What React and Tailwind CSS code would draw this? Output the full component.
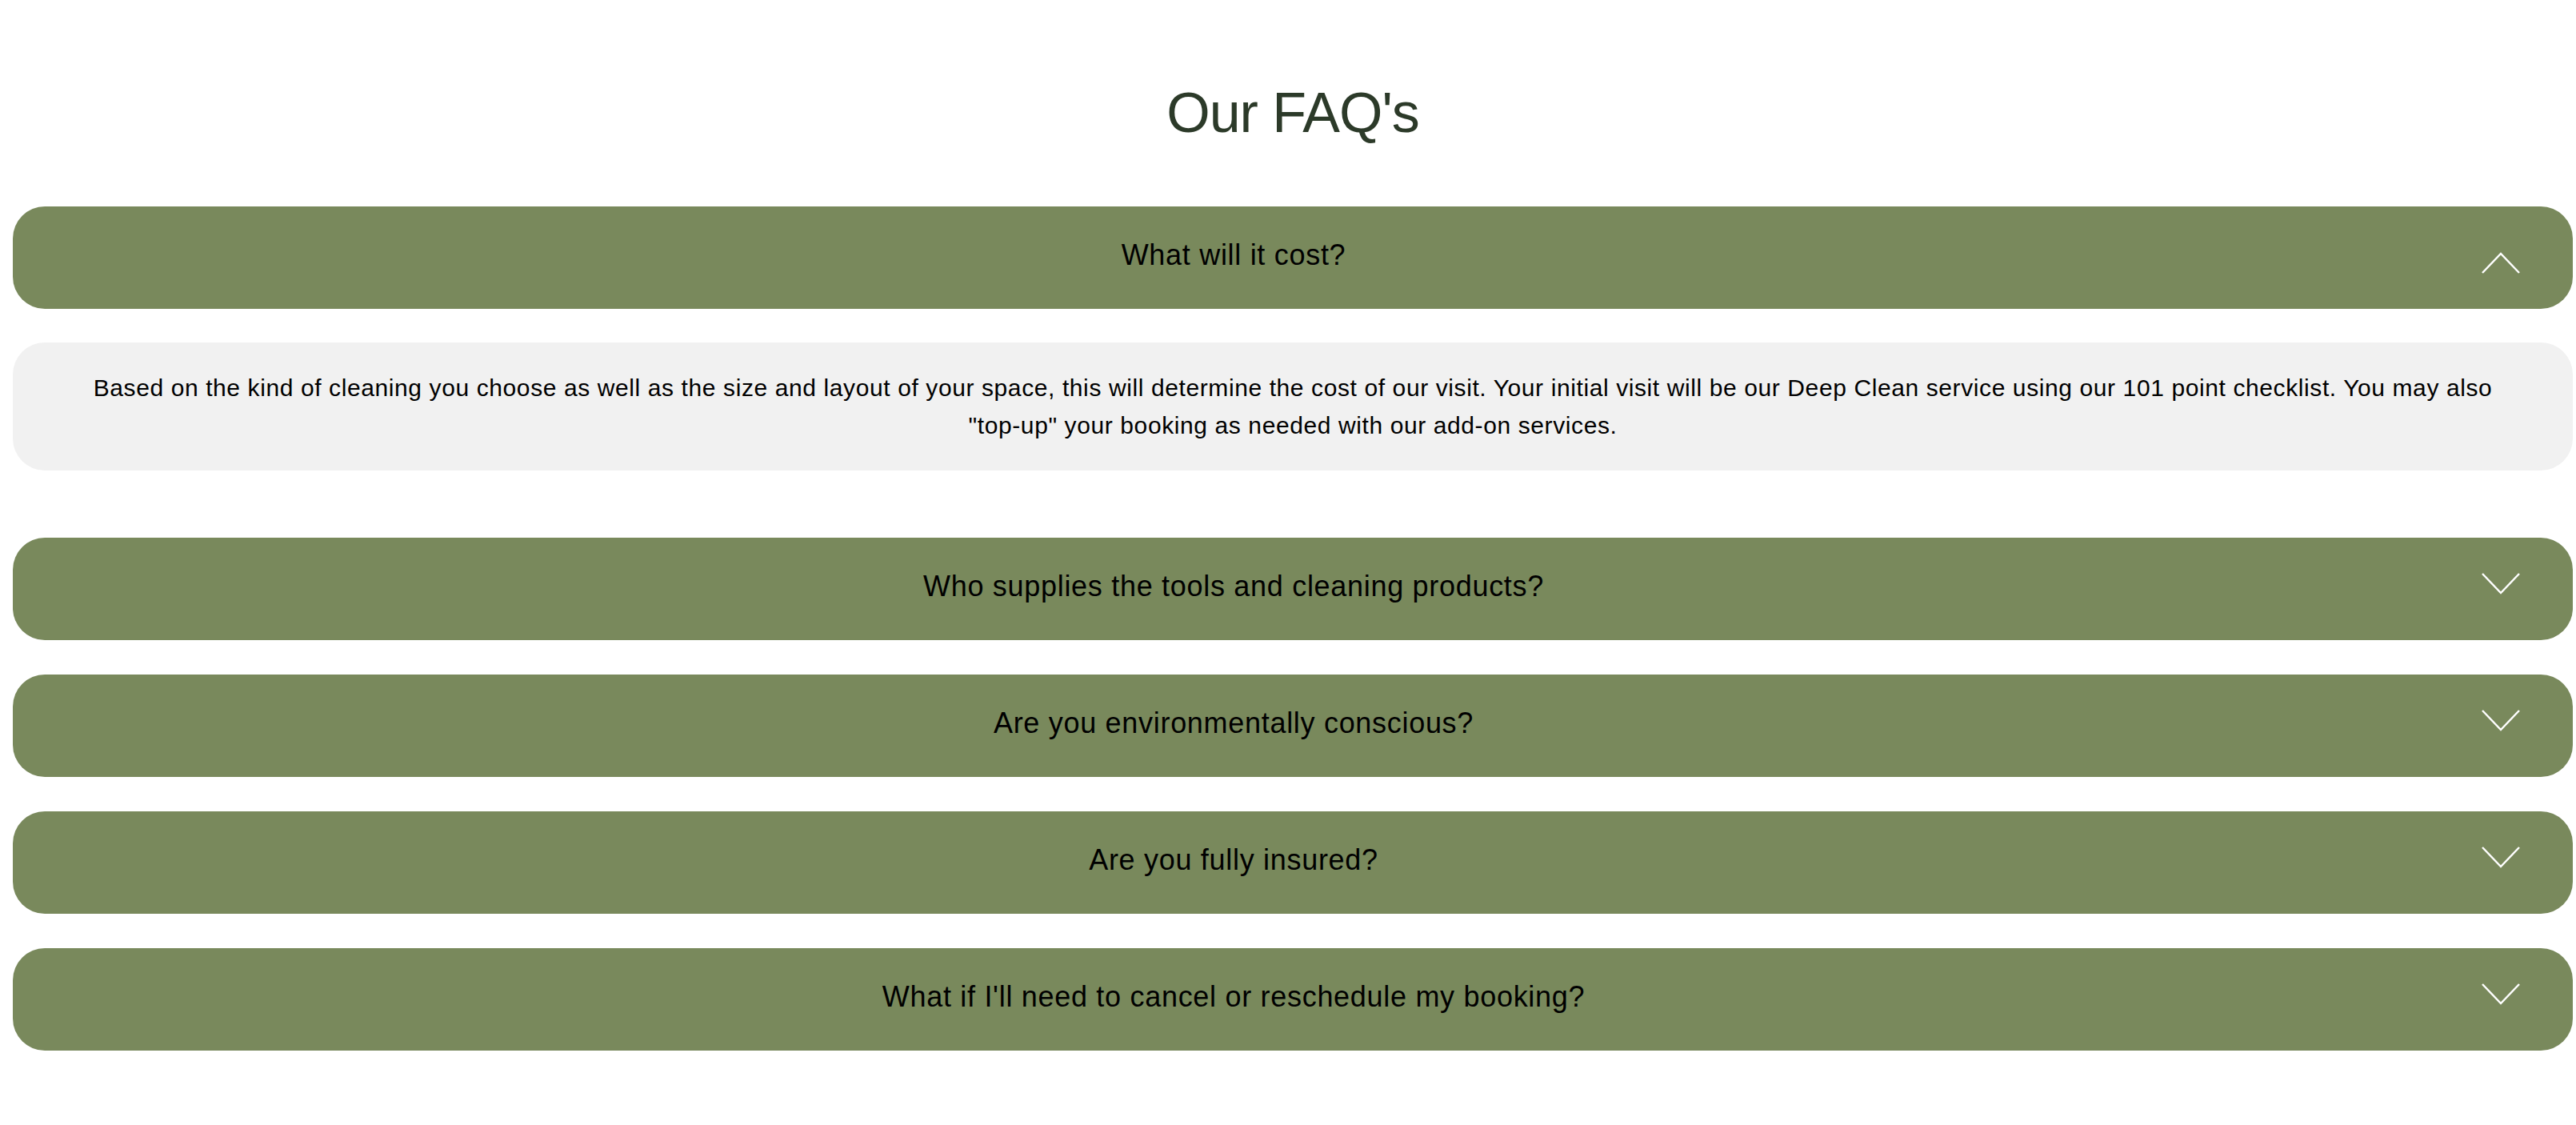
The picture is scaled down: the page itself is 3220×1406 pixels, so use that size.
import React, { useState } from "react";

const faqs = [
  {
    q: "What will it cost?",
    a: 'Based on the kind of cleaning you choose as well as the size and layout of your space, this will determine the cost of our visit. Your initial visit will be our Deep Clean service using our 101 point checklist. You may also "top-up" your booking as needed with our add-on services.',
  },
  { q: "Who supplies the tools and cleaning products?", a: "" },
  { q: "Are you environmentally conscious?", a: "" },
  { q: "Are you fully insured?", a: "" },
  { q: "What if I'll need to cancel or reschedule my booking?", a: "" },
];

const Chevron = ({ open }) => (
  <svg width="48" height="48" viewBox="0 0 48 48" fill="none" className="shrink-0">
    {open ? (
      <polyline points="1,43 24,19 47,43" stroke="#fff" strokeWidth="2.5" />
    ) : (
      <polyline points="1,5 24,29 47,5" stroke="#fff" strokeWidth="2.5" />
    )}
  </svg>
);

const App = () => {
  const [open, setOpen] = useState(0);

  return (
    <div
      className="w-full min-h-screen bg-white pl-[16px] pr-[4px] pt-[99px] pb-[90px]"
      style={{ fontFamily: '"Liberation Sans", Arial, sans-serif' }}
    >
      <h1 className="text-center text-[70px] leading-[84px] tracking-[-1px] text-[#2c3a29] mb-[75px]">
        Our FAQ's
      </h1>

      <div className="flex flex-col gap-[43px]">
        {faqs.map((item, i) => (
          <div key={i} className="flex flex-col gap-[42px]">
            <button
              type="button"
              onClick={() => setOpen(open === i ? -1 : i)}
              className="w-full h-[128px] bg-[#79895c] rounded-[40px] flex items-center pl-[40px] pr-[66px] cursor-pointer"
            >
              <span className="flex-1 text-center text-[36px] tracking-[0.7px] text-black mb-[6px]">
                {item.q}
              </span>
              <span className="ml-[74px] flex">
                <Chevron open={open === i} />
              </span>
            </button>
            {open === i && item.a && (
              <div className="w-full bg-[#f1f1f1] rounded-[40px] px-[80px] py-[33px] mb-[41px]">
                <p className="text-center text-[30px] leading-[47px] tracking-[0.6px] text-black">
                  {item.a}
                </p>
              </div>
            )}
          </div>
        ))}
      </div>
    </div>
  );
};

export default App;
